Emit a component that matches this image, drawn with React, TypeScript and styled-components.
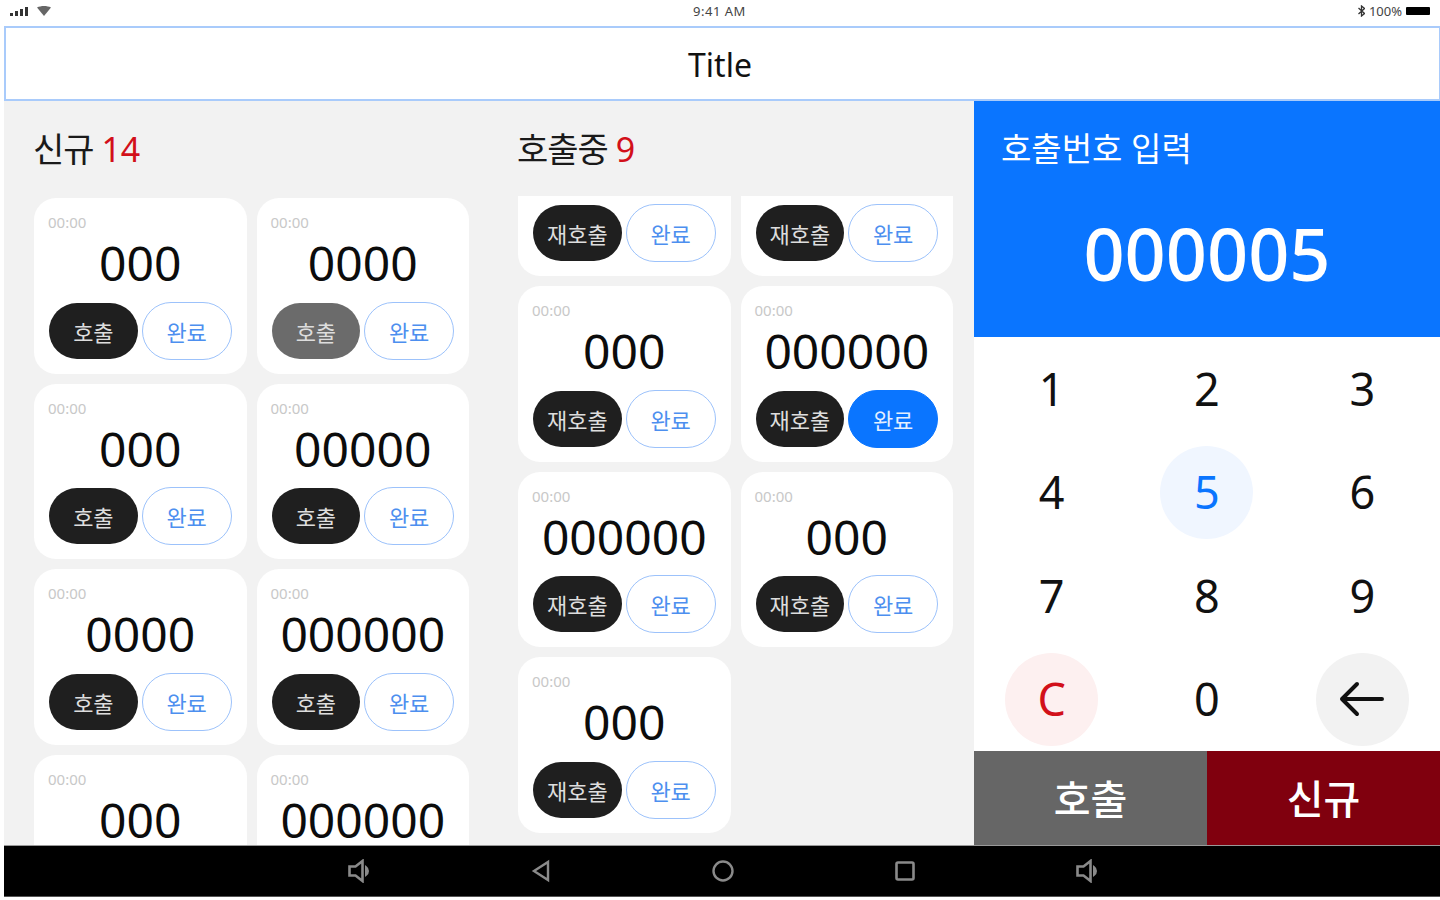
import styled, { createGlobalStyle } from 'styled-components';

const GlobalStyle = createGlobalStyle`
  html, body {
    margin: 0;
    padding: 0;
    background: #fff;
    font-family: "Noto Sans", "Noto Sans CJK KR", sans-serif;
  }
  * { box-sizing: border-box; }
`;

const Screen = styled.div`
  width: 1440px;
  height: 900px;
  padding-left: 4px;
  overflow: hidden;
  display: flex;
  flex-direction: column;
  background: #fff;
`;
const StatusBar = styled.div`
  height: 26px;
  padding: 0 7px 4px 6px;
  margin-left: -4px;
  display: grid;
  grid-template-columns: 1fr auto 1fr;
  align-items: center;
  font-size: 13px;
  color: #444;
`;
const StatusLeft = styled.div`
  display: flex;
  align-items: center;
  gap: 8px;
  padding-left: 4px;
`;
const StatusRight = styled.div`
  display: flex;
  align-items: center;
  justify-content: flex-end;
  gap: 4px;
`;
const Clock = styled.div`
  letter-spacing: 0.5px;
`;
const Battery = styled.div`
  width: 24px;
  height: 8px;
  background: #000;
  border-radius: 1px;
  margin-right: 3px;
`;
const TitleBar = styled.div`
  height: 75px;
  padding: 2px 5px 0 0;
  display: flex;
  align-items: center;
  justify-content: center;
  border: 2px solid #a9cbfb;
  border-right-width: 1px;
  font-size: 32px;
  color: #111;
`;
const Body = styled.div`
  height: 744px;
  display: flex;
`;
const Board = styled.div`
  width: 970px;
  padding: 0 21px 0 30px;
  display: flex;
  gap: 49px;
  background: #f2f2f2;
`;
const Column = styled.section`
  width: 435px;
  display: flex;
  flex-direction: column;
`;
const ColumnTitle = styled.h2`
  height: 95px;
  margin: 0 0 0 -1px;
  padding-top: 25px;
  font-size: 34px;
  line-height: 46px;
  font-weight: 400;
  letter-spacing: -1px;
  color: #1a1a1a;
`;
const Count = styled.span`
  color: #d2101a;
  letter-spacing: 0;
`;
const Viewport = styled.div`
  flex: 1;
  overflow: hidden;
`;
const CardGrid = styled.div<{ $offset: number }>`
  margin-top: ${(p) => p.$offset}px;
  display: grid;
  grid-template-columns: 212.5px 212.5px;
  grid-auto-rows: 175.5px;
  gap: 10px;
`;
const Card = styled.div`
  padding: 12px 15px 0;
  display: flex;
  flex-direction: column;
  background: #fff;
  border-radius: 22px;
`;
const Time = styled.div`
  height: 24px;
  margin-left: -1px;
  font-size: 15px;
  line-height: 24px;
  color: #c8c8c8;
`;
const Ticket = styled.div`
  height: 56px;
  margin-top: 1px;
  font-size: 48px;
  line-height: 56px;
  text-align: center;
  color: #0c0c0c;
`;
const Actions = styled.div`
  margin-top: 10.5px;
  display: flex;
  align-items: center;
  gap: 4px;
`;
const CallButton = styled.div<{ $muted?: boolean }>`
  width: 89px;
  height: 56px;
  display: flex;
  align-items: center;
  justify-content: center;
  border-radius: 28px;
  font-size: 22px;
  color: #ddd;
  background: ${(p) => (p.$muted ? '#6b6b6b' : '#1f1f1f')};
`;
const DoneButton = styled.div<{ $active?: boolean }>`
  width: 90px;
  height: 58px;
  display: flex;
  align-items: center;
  justify-content: center;
  border-radius: 29px;
  border: 1.5px solid ${(p) => (p.$active ? '#0a75ff' : '#9cc2fb')};
  font-size: 22px;
  color: ${(p) => (p.$active ? '#e4efff' : '#4d8fef')};
  background: ${(p) => (p.$active ? '#0a75ff' : '#fff')};
`;
const Keypad = styled.aside`
  width: 466px;
  display: flex;
  flex-direction: column;
`;
const Display = styled.div`
  height: 236px;
  padding-top: 25px;
  background: #0a75ff;
  color: #fff;
`;
const DisplayLabel = styled.div`
  padding-left: 27px;
  font-size: 33px;
  line-height: 45px;
`;
const DisplayValue = styled.div`
  margin-top: 33px;
  font-size: 72px;
  font-weight: 500;
  line-height: 98px;
  text-align: center;
`;
const Keys = styled.div`
  height: 414px;
  display: grid;
  grid-template-columns: repeat(3, 1fr);
  grid-template-rows: repeat(4, 1fr);
  background: #fff;
`;
const Key = styled.div<{ $tone?: 'active' | 'clear' | 'back' }>`
  width: 93px;
  height: 93px;
  padding-bottom: 1px;
  justify-self: center;
  align-self: center;
  display: flex;
  align-items: center;
  justify-content: center;
  border-radius: 50%;
  font-size: 45px;
  color: ${(p) => (p.$tone === 'active' ? '#0a75ff' : p.$tone === 'clear' ? '#d2101a' : '#111')};
  background: ${(p) =>
    p.$tone === 'active' ? '#f0f6ff' : p.$tone === 'clear' ? '#fdf0f0' : p.$tone === 'back' ? '#f2f2f2' : 'transparent'};
`;
const Footer = styled.div`
  height: 94px;
  display: flex;
`;
const FooterButton = styled.div<{ $bg: string }>`
  flex: 1;
  padding-bottom: 3px;
  display: flex;
  align-items: center;
  justify-content: center;
  font-size: 40px;
  font-weight: 500;
  color: #fff;
  background: ${(p) => p.$bg};
`;
const NavBar = styled.div`
  height: 52px;
  padding-left: 1px;
  display: grid;
  grid-template-columns: repeat(5, 182px);
  justify-content: center;
  justify-items: center;
  align-items: center;
  background: #000;
  border-top: 1px solid #999;
  border-bottom: 1px solid #555;
`;

const cardsNew = ['000', '0000', '000', '00000', '0000', '000000', '000', '000000'];
const cardsCalling = ['000', '000', '000', '000000', '000000', '000', '000'];

const Speaker = () => (
  <svg width="24" height="24" viewBox="0 0 24 24" fill="none" stroke="#8a8a8a" strokeWidth="2.6">
    <path d="M2.5 7.5h6l7-5.5v20l-7-5.5h-6z" />
    <path d="M19 8a5 5 0 0 1 0 8z" fill="#8a8a8a" strokeWidth="2" />
  </svg>
);

const App = () => {
  return (
    <Screen>
      <GlobalStyle />
      <StatusBar>
        <StatusLeft>
          <svg width="19" height="10" viewBox="0 0 19 10" fill="#333">
            <rect x="0" y="7" width="3" height="3" />
            <rect x="5" y="5" width="3" height="5" />
            <rect x="10" y="3" width="3" height="7" />
            <rect x="15" y="1" width="3" height="9" />
          </svg>
          <svg width="14" height="10" viewBox="0 0 14 10" fill="#666">
            <path d="M0 1.5C4 -.5 10 -.5 14 1.5L7 10z" />
          </svg>
        </StatusLeft>
        <Clock>9:41 AM</Clock>
        <StatusRight>
          <svg width="7" height="12" viewBox="0 0 7 12" fill="none" stroke="#333" strokeWidth="1.3">
            <path d="M0.5 3l6 5.5L3.5 11V1l3 2.5L0.5 9" />
          </svg>
          <span>100%</span>
          <Battery />
        </StatusRight>
      </StatusBar>
      <TitleBar>Title</TitleBar>
      <Body>
        <Board>
          <Column>
            <ColumnTitle>
              신규 <Count>14</Count>
            </ColumnTitle>
            <Viewport>
              <CardGrid $offset={2}>
                {cardsNew.map((no, i) => (
                  <Card key={i}>
                    <Time>00:00</Time>
                    <Ticket>{no}</Ticket>
                    <Actions>
                      <CallButton $muted={i === 1}>호출</CallButton>
                      <DoneButton>완료</DoneButton>
                    </Actions>
                  </Card>
                ))}
              </CardGrid>
            </Viewport>
          </Column>
          <Column>
            <ColumnTitle>
              호출중 <Count>9</Count>
            </ColumnTitle>
            <Viewport>
              <CardGrid $offset={-95.5}>
                {cardsCalling.map((no, i) => (
                  <Card key={i}>
                    <Time>00:00</Time>
                    <Ticket>{no}</Ticket>
                    <Actions>
                      <CallButton>재호출</CallButton>
                      <DoneButton $active={i === 3}>완료</DoneButton>
                    </Actions>
                  </Card>
                ))}
              </CardGrid>
            </Viewport>
          </Column>
        </Board>
        <Keypad>
          <Display>
            <DisplayLabel>호출번호 입력</DisplayLabel>
            <DisplayValue>000005</DisplayValue>
          </Display>
          <Keys>
            <Key>1</Key>
            <Key>2</Key>
            <Key>3</Key>
            <Key>4</Key>
            <Key $tone="active">5</Key>
            <Key>6</Key>
            <Key>7</Key>
            <Key>8</Key>
            <Key>9</Key>
            <Key $tone="clear">C</Key>
            <Key>0</Key>
            <Key $tone="back">
              <svg width="46" height="36" viewBox="0 0 46 36" fill="none" stroke="#111" strokeWidth="4" strokeLinecap="round" strokeLinejoin="round">
                <path d="M3 18h40M18 3L3 18l15 15" />
              </svg>
            </Key>
          </Keys>
          <Footer>
            <FooterButton $bg="#666666">호출</FooterButton>
            <FooterButton $bg="#80000e">신규</FooterButton>
          </Footer>
        </Keypad>
      </Body>
      <NavBar>
        <Speaker />
        <svg width="20" height="24" viewBox="0 0 20 24" fill="none" stroke="#8a8a8a" strokeWidth="2.4">
          <path d="M17 3v18L3 12z" />
        </svg>
        <svg width="24" height="24" viewBox="0 0 24 24" fill="none" stroke="#8a8a8a" strokeWidth="2.4">
          <circle cx="12" cy="12" r="9.5" />
        </svg>
        <svg width="22" height="22" viewBox="0 0 22 22" fill="none" stroke="#8a8a8a" strokeWidth="2.6">
          <rect x="2.5" y="2.5" width="17" height="17" rx="1.5" />
        </svg>
        <Speaker />
      </NavBar>
    </Screen>
  );
};

export default App;
